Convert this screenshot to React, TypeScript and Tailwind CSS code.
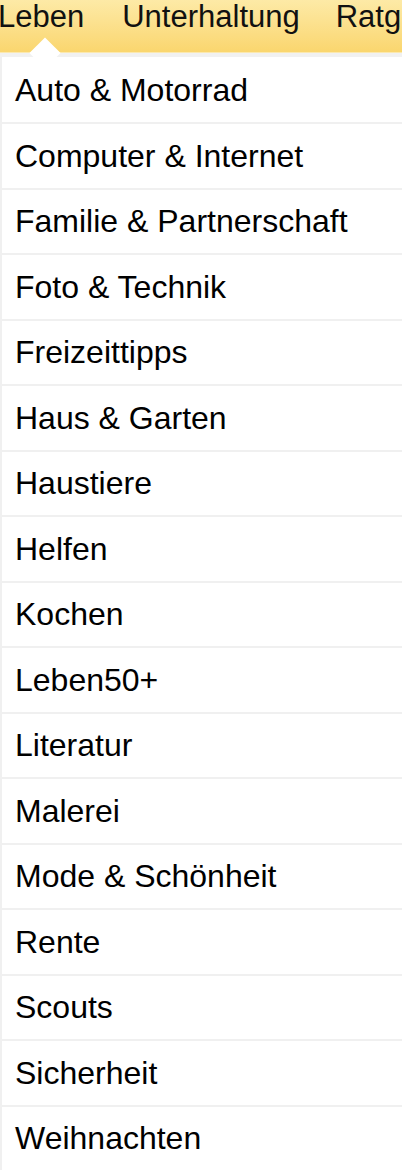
import React from "react";

const items = [
  "Auto & Motorrad",
  "Computer & Internet",
  "Familie & Partnerschaft",
  "Foto & Technik",
  "Freizeittipps",
  "Haus & Garten",
  "Haustiere",
  "Helfen",
  "Kochen",
  "Leben50+",
  "Literatur",
  "Malerei",
  "Mode & Schönheit",
  "Rente",
  "Scouts",
  "Sicherheit",
  "Weihnachten",
];

export default function App() {
  return (
    <div
      className="w-[402px] h-[1170px] overflow-hidden bg-[#f0f0f0] text-black"
      style={{ fontFamily: '"Liberation Sans", Arial, Helvetica, sans-serif' }}
    >
      <div className="relative h-[53px] bg-gradient-to-b from-[#fdeaa6] to-[#fad66e] border-b border-[#fbe9b0]">
        <div className="flex whitespace-nowrap text-[31px] leading-none pt-[1px] text-[#111]">
          <span className="ml-[-2px]">Leben</span>
          <span className="ml-[38px]">Unterhaltung</span>
          <span className="ml-[36px]">Ratgeber</span>
        </div>
        <div className="absolute left-[34px] top-[42px] w-[22px] h-[22px] rotate-45 bg-white z-10" />
      </div>
      <div className="h-[4px] bg-[#f1f1f1]" />
      <div className="ml-[2px] bg-white">
        {items.map((it, i) => (
          <div
            key={it}
            className={
              i === 0
                ? "h-[67px] border-b-2 border-[#f0f0f0] flex items-center pl-[13px] text-[32px] leading-none"
                : "h-[65.5px] border-b-2 border-[#f0f0f0] flex items-center pl-[13px] text-[32px] leading-none"
            }
          >
            {it}
          </div>
        ))}
      </div>
    </div>
  );
}
